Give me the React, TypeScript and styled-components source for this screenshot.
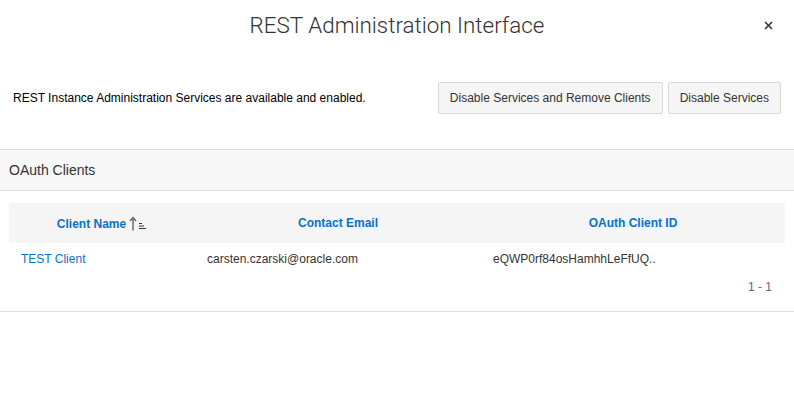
import React from 'react'
import styled, { createGlobalStyle } from 'styled-components'

const GlobalStyle = createGlobalStyle`
  *, *::before, *::after {
    box-sizing: border-box;
  }
  html, body {
    margin: 0;
    padding: 0;
    background: #fff;
  }
  body {
    font-family: "Liberation Sans", Arial, sans-serif;
    color: #333;
  }
`

const Dialog = styled.main`
  width: 794px;
  height: 393px;
  background: #fff;
  display: flex;
  flex-direction: column;
`

const Header = styled.header`
  height: 50px;
  display: grid;
  grid-template-columns: 60px 1fr 60px;
  align-items: center;
`

const Title = styled.h1`
  grid-column: 2;
  margin: 0;
  text-align: center;
  font-family: Roboto, "Liberation Sans", sans-serif;
  font-weight: 300;
  font-size: 22.4px;
  color: #333;
`

const Close = styled.button`
  justify-self: end;
  margin-right: 18px;
  background: none;
  border: none;
  padding: 0;
  width: 16px;
  height: 16px;
  display: flex;
  align-items: center;
  justify-content: center;
  cursor: pointer;
`

const StatusRow = styled.section`
  display: flex;
  align-items: center;
  justify-content: space-between;
  padding: 32px 13px 0 13px;
  height: 63px;
`

const StatusText = styled.p`
  margin: 0;
  font-size: 12px;
  color: #000;
`

const Actions = styled.div`
  display: flex;
  gap: 5px;
`

const Button = styled.button`
  height: 32px;
  padding: 0 11px;
  font-family: "Liberation Sans", Arial, sans-serif;
  font-size: 12px;
  color: #333;
  background: #f5f5f5;
  border: 1px solid #d9d9d9;
  border-radius: 2px;
  cursor: pointer;
`

const Panel = styled.section`
  margin-top: 36px;
  border-top: 1px solid #dcdcdc;
  border-bottom: 1px solid #dcdcdc;
  padding-bottom: 17px;
`

const PanelTitle = styled.h2`
  margin: 0;
  height: 41px;
  display: flex;
  align-items: center;
  padding-left: 9px;
  background: #f7f7f7;
  border-bottom: 1px solid #dcdcdc;
  font-size: 14px;
  font-weight: 400;
  color: #333;
`

const Table = styled.table`
  margin: 12px 9px 0 9px;
  width: 776px;
  border-collapse: collapse;
  table-layout: fixed;
  font-size: 12px;
`

const HeadCell = styled.th<{ $width: number }>`
  width: ${p => p.$width}px;
  height: 40px;
  padding: 0 12px;
  background: #f5f5f5;
  color: #0572ce;
  font-weight: 700;
  text-align: center;
  white-space: nowrap;
`

const Cell = styled.td`
  height: 32px;
  padding: 0 12px;
  color: #333;
  white-space: nowrap;
`

const LinkText = styled.a`
  color: #0572ce;
  text-decoration: none;
`

const SortIcon = styled.svg`
  margin-left: 3px;
  vertical-align: -3px;
`

const Pager = styled.div`
  text-align: right;
  padding-right: 22px;
  margin-top: 5px;
  font-size: 12px;
  color: #666;
`

const App = () => {
  return (
    <>
      <GlobalStyle />
      <Dialog>
        <Header>
          <Title>REST Administration Interface</Title>
          <Close aria-label="Close">
            <svg width="9" height="9" viewBox="0 0 9 9">
              <path d="M1 1 L8 8 M8 1 L1 8" stroke="#333" strokeWidth="1.6" />
            </svg>
          </Close>
        </Header>

        <StatusRow>
          <StatusText>REST Instance Administration Services are available and enabled.</StatusText>
          <Actions>
            <Button>Disable Services and Remove Clients</Button>
            <Button>Disable Services</Button>
          </Actions>
        </StatusRow>

        <Panel>
          <PanelTitle>OAuth Clients</PanelTitle>
          <Table>
            <thead>
              <tr>
                <HeadCell $width={186}>
                  Client Name
                  <SortIcon width="18" height="15" viewBox="0 0 18 15">
                    <path d="M4 14.5 V2 M1 5 L4 1.5 L7 5" stroke="#666" strokeWidth="1.4" fill="none" />
                    <path d="M10 7.5 H13 M10 10 H15 M10 12.5 H17" stroke="#333" strokeWidth="1.1" />
                  </SortIcon>
                </HeadCell>
                <HeadCell $width={286}>Contact Email</HeadCell>
                <HeadCell $width={304}>OAuth Client ID</HeadCell>
              </tr>
            </thead>
            <tbody>
              <tr>
                <Cell><LinkText href="#">TEST Client</LinkText></Cell>
                <Cell>carsten.czarski@oracle.com</Cell>
                <Cell>eQWP0rf84osHamhhLeFfUQ..</Cell>
              </tr>
            </tbody>
          </Table>
          <Pager>1 - 1</Pager>
        </Panel>
      </Dialog>
    </>
  )
}

export default App
